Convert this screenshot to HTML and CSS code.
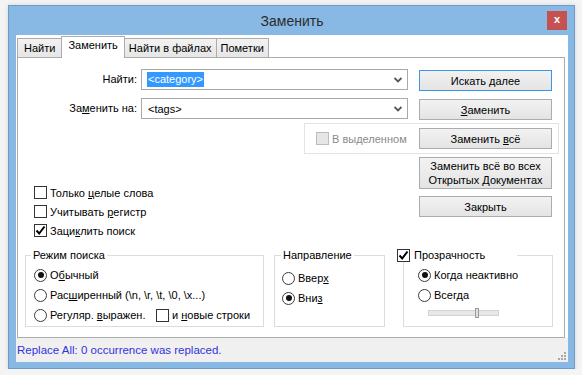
FILE: index.html
```html
<!DOCTYPE html>
<html lang="ru">
<head>
    <meta charset="UTF-8">
    <title>Заменить</title>
    <link rel="stylesheet" href="styles.css">
</head>
<body>

<div class="window">
    <!-- Заголовок окна -->
    <div class="titlebar">
        <span></span>
        <span class="title">Заменить</span>
        <span class="close">x</span>
    </div>

    <div class="client">
        <!-- Вкладки -->
        <div class="tabs">
            <div class="tab">Найти</div>
            <div class="tab active">Заменить</div>
            <div class="tab">Найти в файлах</div>
            <div class="tab">Пометки</div>
        </div>

        <div class="panel">
            <div class="row">
                <span class="field-label">Найти:</span>
                <div class="combo">
                    <span class="selected">&lt;category&gt;</span>
                    <svg class="combo-arrow" width="8" height="6" viewBox="0 0 8 6"><path d="M0.5 1 L4 4.5 L7.5 1" fill="none" stroke="#555" stroke-width="1.8"/></svg>
                </div>
                <button class="btn default">Искать далее</button>
            </div>

            <div class="row row-second">
                <span class="field-label">За<u>м</u>енить на:</span>
                <div class="combo">
                    <span class="value">&lt;tags&gt;</span>
                    <svg class="combo-arrow" width="8" height="6" viewBox="0 0 8 6"><path d="M0.5 1 L4 4.5 L7.5 1" fill="none" stroke="#555" stroke-width="1.8"/></svg>
                </div>
                <button class="btn"><u>З</u>аменить</button>
            </div>

            <div class="selection-box">
                <span class="box disabled"></span>
                <span class="disabled-text">В вы<u>д</u>еленном</span>
                <button class="btn">Заменить <u>в</u>сё</button>
            </div>

            <div class="options">
                <div class="checks">
                    <div class="check-item"><span class="box"></span><span>Только <u>ц</u>елые слова</span></div>
                    <div class="check-item"><span class="box"></span><span>Учитывать <u>р</u>егистр</span></div>
                    <div class="check-item">
                        <span class="box"><svg width="11" height="11" viewBox="0 0 11 11"><path d="M1.5 5.5 L4.2 8.5 L9.5 1.5" fill="none" stroke="#000" stroke-width="2"/></svg></span>
                        <span>Заци<u>к</u>лить поиск</span>
                    </div>
                </div>
                <div class="actions">
                    <button class="btn btn-tall">Заменить всё во всех<br>Открытых Документах</button>
                    <button class="btn btn-close">Закрыть</button>
                </div>
            </div>

            <div class="groups">
                <fieldset class="group group-mode">
                    <legend>Режим поиска</legend>
                    <div class="radio-item"><span class="radio on"></span><span>О<u>б</u>ычный</span></div>
                    <div class="radio-item"><span class="radio"></span><span>Рас<u>ш</u>иренный (\n, \r, \t, \0, \x...)</span></div>
                    <div class="radio-item">
                        <span class="radio"></span><span class="regex-label">Регуляр. <u>в</u>ыражен.</span>
                        <span class="box"></span><span>и <u>н</u>овые строки</span>
                    </div>
                </fieldset>

                <fieldset class="group group-dir">
                    <legend>Направление</legend>
                    <div class="radio-item"><span class="radio"></span><span>Ввер<u>х</u></span></div>
                    <div class="radio-item"><span class="radio on"></span><span>Вни<u>з</u></span></div>
                </fieldset>

                <fieldset class="group group-alpha">
                    <legend>
                        <span class="box"><svg width="11" height="11" viewBox="0 0 11 11"><path d="M1.5 5.5 L4.2 8.5 L9.5 1.5" fill="none" stroke="#000" stroke-width="2"/></svg></span>
                        <span>Прозрачность</span>
                    </legend>
                    <div class="radio-item"><span class="radio on"></span><span>Когда неактивно</span></div>
                    <div class="radio-item"><span class="radio"></span><span>Всегда</span></div>
                    <div class="slider">
                        <span class="slider-thumb"></span>
                    </div>
                </fieldset>
            </div>
        </div>

        <!-- Строка состояния -->
        <div class="statusbar">
            <span>Replace All: 0 occurrence was replaced.</span>
            <svg class="grip" width="9" height="9" viewBox="0 0 9 9">
                <rect x="7" y="1" width="2" height="2" fill="#a8a8a8"/>
                <rect x="4" y="4" width="2" height="2" fill="#a8a8a8"/>
                <rect x="7" y="4" width="2" height="2" fill="#a8a8a8"/>
                <rect x="1" y="7" width="2" height="2" fill="#a8a8a8"/>
                <rect x="4" y="7" width="2" height="2" fill="#a8a8a8"/>
                <rect x="7" y="7" width="2" height="2" fill="#a8a8a8"/>
            </svg>
        </div>
    </div>
</div>

</body>
</html>
```

FILE: styles.css
```css
* {
    box-sizing: border-box;
}

body {
    margin: 0;
    background: #f4f4f4;
    font-family: "Liberation Sans", Arial, sans-serif;
    font-size: 11px;
    color: #000;
}

u {
    text-decoration: underline;
}

.window {
    margin: 5px 0 0 8px;
    width: 567px;
    height: 364px;
    border: 1px solid #6c9acb;
    background: #88b9e5;
    padding: 0 6px 6px 7px;
    display: flex;
    flex-direction: column;
    box-shadow: 0 0 5px rgba(0, 0, 0, 0.12);
}

.titlebar {
    height: 29px;
    display: grid;
    grid-template-columns: 1fr auto 1fr;
    align-items: start;
}

.title {
    font-size: 14px;
    line-height: 16px;
    margin-top: 7px;
    color: #2b2b2b;
}

.close {
    justify-self: end;
    width: 20px;
    height: 19px;
    margin-top: 5px;
    margin-right: 1px;
    background: #c75050;
    color: #fff;
    font-weight: bold;
    font-size: 11px;
    line-height: 17px;
    text-align: center;
}

.client {
    flex: 1;
    background: #fff;
    display: flex;
    flex-direction: column;
}

/* вкладки */
.tabs {
    display: flex;
    align-items: flex-end;
    height: 22px;
    padding: 1px 0 0 1px;
}

.tab {
    height: 19px;
    padding: 0 4px;
    line-height: 18px;
    border: 1px solid #acacac;
    border-bottom: none;
    background: linear-gradient(#f2f2f2, #e6e6e6);
    margin-right: -1px;
}

.tab:first-child {
    padding: 0 6px;
}

.tab.active {
    height: 22px;
    margin-bottom: -1px;
    padding: 0 6px;
    line-height: 17px;
    background: #fff;
    position: relative;
    z-index: 1;
}

.panel {
    flex: 1;
    border: 1px solid #acacac;
    margin: 0 3px 0 1px;
    padding-top: 11px;
}

/* поля ввода */
.row {
    display: flex;
    height: 22px;
    margin-bottom: 7px;
}

.row-second {
    margin-bottom: 3px;
}

.field-label {
    width: 119px;
    margin-right: 4px;
    text-align: right;
    line-height: 21px;
}

.combo {
    width: 267px;
    height: 21px;
    border: 1px solid #a9a9a9;
    display: flex;
    align-items: center;
    padding: 0 5px 0 5px;
}

.selected {
    background: #3399ff;
    color: #fff;
    padding: 0 1px;
    line-height: 15px;
}

.value {
    padding-left: 1px;
}

.combo-arrow {
    margin-left: auto;
}

.btn {
    width: 133px;
    height: 21px;
    padding: 0;
    border: 1px solid #acacac;
    background: linear-gradient(#f2f2f2, #e4e4e4);
    font: inherit;
    color: #000;
    align-self: flex-end;
    margin-left: 11px;
}

.btn.default {
    border-color: #3c96e6;
}

.selection-box {
    margin-left: 286px;
    width: 255px;
    border: 1px solid #e3e3e3;
    padding: 4px 6px 4px 11px;
    display: flex;
    align-items: center;
}

.selection-box .btn {
    margin-left: auto;
}

.disabled-text {
    color: #8a8a8a;
}

/* флажки */
.box {
    width: 13px;
    height: 13px;
    border: 1px solid #333;
    background: #fff;
    margin-right: 3px;
    display: flex;
    align-items: center;
    justify-content: center;
    flex-shrink: 0;
}

.box.disabled {
    background: #e6e6e6;
    border-color: #bcbcbc;
}

.options {
    display: flex;
    margin-top: 3px;
}

.checks {
    padding-left: 16px;
    margin-top: 26px;
}

.check-item {
    display: flex;
    align-items: center;
    height: 19px;
}

.actions {
    margin-left: auto;
    margin-right: 12px;
    display: flex;
    flex-direction: column;
}

.actions .btn {
    margin-left: 0;
}

.btn-tall {
    height: 32px;
    line-height: 14px;
}

.btn-close {
    margin-top: 7px;
}

/* группы */
.groups {
    display: flex;
    margin-top: 8px;
    padding-left: 7px;
}

.group {
    margin: 0;
    padding: 3px 0 0 0;
    border: 1px solid #dcdcdc;
    height: 79px;
    min-width: 0;
}

.group legend {
    padding: 0 2px;
    line-height: 14px;
}

.group-mode {
    width: 239px;
    padding-left: 8px;
}

.group-mode legend {
    margin-left: -3px;
}

.group-dir {
    width: 111px;
    margin-left: 10px;
    padding-top: 6px;
    padding-left: 7px;
}

.group-dir legend {
    margin-left: -1px;
}

.group-alpha {
    width: 150px;
    margin-left: 18px;
    padding-left: 14px;
}

.group-alpha legend {
    margin-left: -21px;
    width: 120px;
    padding: 0;
    display: flex;
    align-items: center;
}

.group-alpha legend .box {
    margin-right: 4px;
}

.radio-item {
    display: flex;
    align-items: center;
    height: 20px;
}

.radio {
    width: 13px;
    height: 13px;
    border: 1px solid #3a3a3a;
    border-radius: 50%;
    margin-right: 3px;
    display: flex;
    align-items: center;
    justify-content: center;
    flex-shrink: 0;
}

.radio.on::after {
    content: "";
    width: 6px;
    height: 6px;
    border-radius: 50%;
    background: #111;
}

.regex-label {
    width: 106px;
}

.slider {
    position: relative;
    margin: 3px 0 0 10px;
    width: 71px;
    height: 10px;
    display: flex;
    align-items: center;
}

.slider::before {
    content: "";
    width: 100%;
    height: 4px;
    background: #e7e7e7;
    border: 1px solid #d4d4d4;
}

.slider-thumb {
    position: absolute;
    left: 47px;
    top: 0;
    width: 4px;
    height: 10px;
    background: #e0e0e0;
    border: 1px solid #9a9a9a;
}

/* строка состояния */
.statusbar {
    height: 24px;
    background: #f0f0f0;
    display: flex;
    align-items: center;
    justify-content: space-between;
    padding: 0 2px 0 1px;
    font-size: 11.5px;
    color: #3232dc;
}

.grip {
    align-self: flex-end;
    margin-bottom: 2px;
}
```
